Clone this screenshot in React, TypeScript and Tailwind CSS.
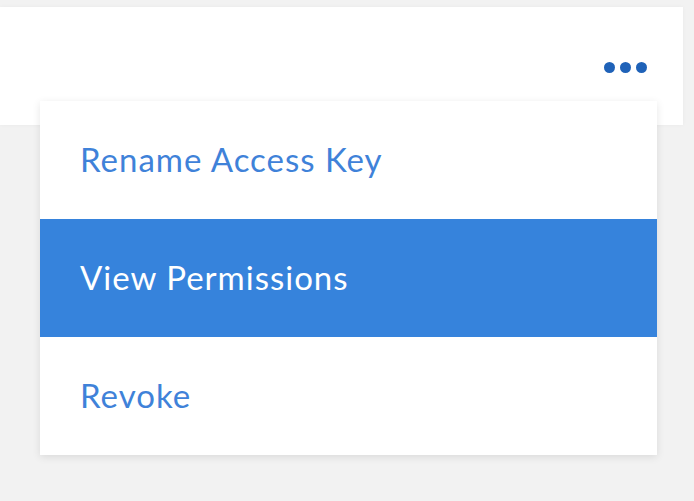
export default function App() {
  const items = [
    { label: "Rename Access Key", active: false },
    { label: "View Permissions", active: true },
    { label: "Revoke", active: false },
  ]

  return (
    <div className="relative min-h-[501px] w-[694px] overflow-hidden bg-[#f2f2f2] pt-[7px] font-['Lato','Liberation_Sans',sans-serif]">
      {/* Card row */}
      <div className="flex h-[118px] w-[683px] items-start justify-end bg-white pr-[36px] pt-[55px] shadow-[0_0_4px_rgba(0,0,0,0.04)]">
        <button className="flex items-center gap-[5px]">
          <span className="h-[11px] w-[11px] rounded-full bg-[#1f62b8]" />
          <span className="h-[11px] w-[11px] rounded-full bg-[#1f62b8]" />
          <span className="h-[11px] w-[11px] rounded-full bg-[#1f62b8]" />
        </button>
      </div>

      {/* Dropdown menu */}
      <div className="absolute left-[40px] top-[101px] w-[617px] bg-white shadow-[0_2px_8px_rgba(0,0,0,0.10)]">
        {items.map((item) => (
          <div
            key={item.label}
            className={`flex h-[118px] items-center pl-[40px] text-[33px] tracking-[1px] ${
              item.active ? "bg-[#3683dc] text-white" : "text-[#3f82d9]"
            }`}
          >
            {item.label}
          </div>
        ))}
      </div>
    </div>
  )
}
